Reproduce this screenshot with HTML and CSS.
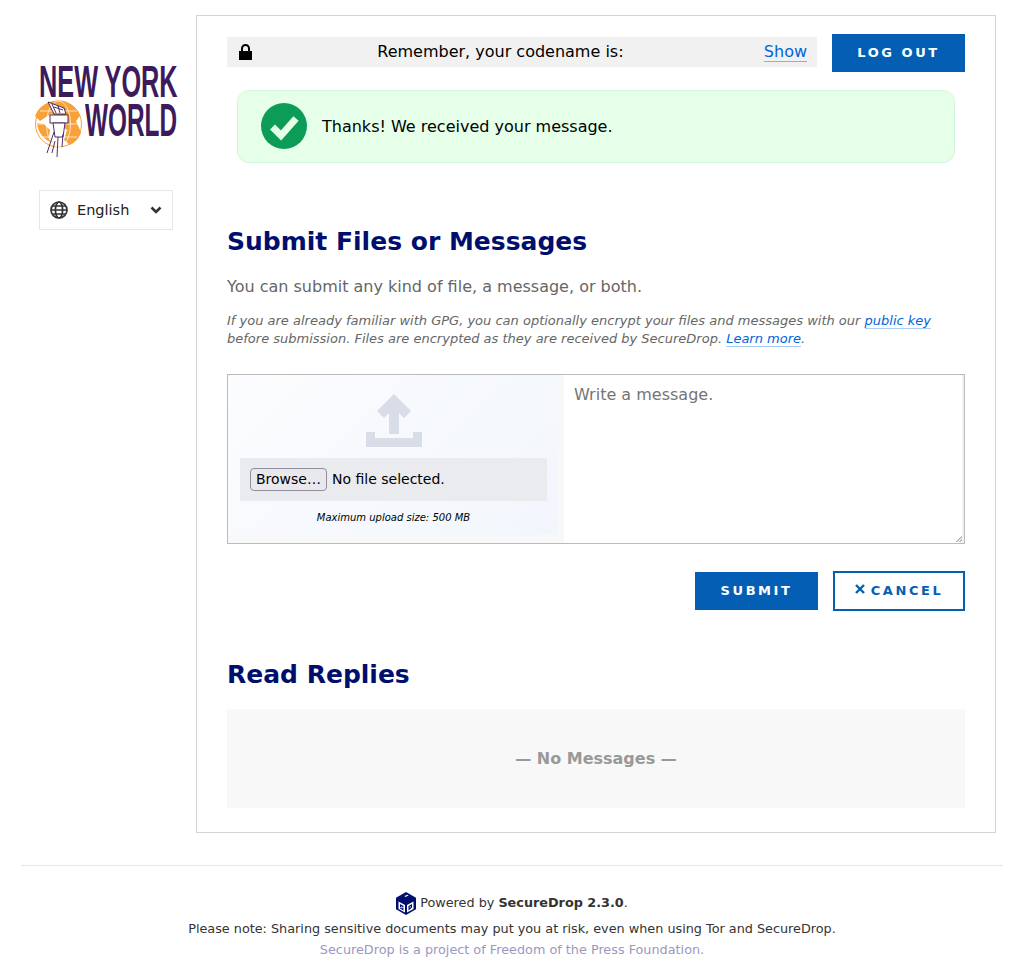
FILE: index.html
```
<!DOCTYPE html>
<html lang="en">
<head>
<meta charset="utf-8">
<title>SecureDrop</title>
<link rel="stylesheet" href="styles.css">
</head>
<body>
<div class="layout">
  <aside class="sidebar">
    <svg class="logo" width="146" height="106" viewBox="0 -6 146 106" role="img" aria-label="New York World">
      <circle cx="23.500" cy="63" r="23" fill="#fff" stroke="#f7a138" stroke-width="1"/>
      <path d="M15 41a23 23 0 0 1 30 14l-4 5 4 9 1 3a23 23 0 0 1-11 12l-6-5 3-10-8-6-2-8-6-2-5 3-6 4-5-5a23 23 0 0 1 15-14z" fill="#f7a138"/>
      <path d="M2 62l7 1 6 6-1 8 4 5a23 23 0 0 1-16-20z" fill="#f7a138"/>
      <g fill="none" stroke="#fff" stroke-width="0.7">
        <ellipse cx="23.500" cy="63" rx="12" ry="23"/>
        <path d="M1 63H46M5 50H42M5 76H42"/>
      </g>
      <g fill="#fff" stroke="#3c1a5b" stroke-width="0.9">
        <path d="M13 41l16 6 2 6H19z"/>
        <path d="M19 46l9 3M17 43l4 9M23 45l2 7" fill="none"/>
        <rect x="15" y="54" width="18" height="8"/>
        <path d="M18 62h12l-2 14H20z"/>
        <path d="M19 71l-7 21M28 73l-1 13M23 76l-1 20M20 80l-3 12" fill="none"/>
      </g>
      <text class="logo-text" transform="translate(4 36) scale(0.575 1)">NEW YORK</text>
      <text class="logo-text logo-text-big" transform="translate(50 75) scale(0.53 1)">WORLD</text>
    </svg>
    <div class="locale">
      <svg class="globe" width="18" height="18" viewBox="0 0 18 18" fill="none" stroke="#333" stroke-width="1.700">
        <circle cx="9" cy="9" r="8"/>
        <ellipse cx="9" cy="9" rx="3.600" ry="8"/>
        <path d="M1 9H17M2 5H16M2 13H16"/>
      </svg>
      <span class="locale-name">English</span>
      <svg class="chevron" width="12" height="8" viewBox="0 0 12 8" fill="none" stroke="#333" stroke-width="2.600">
        <path d="M1.500 1.500L6 6L10.500 1.500"/>
      </svg>
    </div>
  </aside>

  <main class="panel">
    <div class="topbar">
      <div class="codename">
        <svg class="lock" width="13" height="16" viewBox="0 0 13 16">
          <path d="M0 7H13V16H0Z" fill="#000"/>
          <path d="M3 8V4.500a3.500 3.500 0 0 1 7 0V8" fill="none" stroke="#000" stroke-width="2"/>
        </svg>
        <span class="codename-text">Remember, your codename is:</span>
        <a class="show-link" href="#">Show</a>
      </div>
      <a class="btn btn-primary btn-logout" href="#">LOG OUT</a>
    </div>

    <div class="flash">
      <svg class="flash-icon" width="46" height="46" viewBox="0 0 46 46">
        <circle cx="23" cy="23" r="23" fill="#0c9c58"/>
        <path d="M11.500 24L20 32.500L35 15.500" fill="none" stroke="#e5ffe9" stroke-width="7"/>
      </svg>
      <span>Thanks! We received your message.</span>
    </div>

    <h2 class="heading heading-submit">Submit Files or Messages</h2>
    <p class="lead">You can submit any kind of file, a message, or both.</p>
    <p class="note">If you are already familiar with GPG, you can optionally encrypt your files and messages with our <a href="#">public key</a> before submission. Files are encrypted as they are received by SecureDrop. <a href="#">Learn more</a>.</p>

    <form class="composer">
      <div class="upload">
        <svg class="upload-icon" width="56" height="53" viewBox="0 0 56 53" fill="#d9dde7">
          <path d="M28 0L45 17L38 24L33 19V40H23V19L18 24L11 17Z"/>
          <path d="M0 38H9V44H47V38H56V53H0Z"/>
        </svg>
        <div class="file-row">
          <button class="browse" type="button">Browse…</button>
          <span>No file selected.</span>
        </div>
        <p class="max-size">Maximum upload size: 500 MB</p>
      </div>
      <textarea class="message" placeholder="Write a message."></textarea>
    </form>

    <div class="actions">
      <a class="btn btn-primary btn-submit" href="#">SUBMIT</a>
      <a class="btn btn-outline" href="#">
        <svg class="x" width="10" height="10" viewBox="0 0 10 10" fill="none" stroke="#045fb4" stroke-width="2.400">
          <path d="M1 1L9 9M9 1L1 9"/>
        </svg>
        CANCEL
      </a>
    </div>

    <h2 class="heading heading-replies">Read Replies</h2>
    <div class="no-messages">— No Messages —</div>
  </main>
</div>

<footer class="footer">
  <div class="powered">
    <svg class="sd-logo" width="20" height="23" viewBox="0 0 20 23">
      <path d="M10 0L20 5.700V17.300L10 23L0 17.300V5.700Z" fill="#000f6e"/>
      <path d="M2.500 9.500L9 13V20.500L2.500 17ZM11 13L17.500 9.500V17L11 20.500Z" fill="#fff"/>
      <path d="M8.500 4L11.500 2.800L12.500 3.600L9.500 5Z" fill="#fff"/>
      <path d="M4 12L7.500 14V15.500L5 14.200V15L7.500 16.300V18.500L4 16.500V15.400L6.200 16.600V16L4 14.800ZM12.500 14L16 12V15.500L12.500 18.500ZM13.700 14.800V16L14.800 15V14.100Z" fill="#000f6e"/>
    </svg>
    <span class="powered-text">Powered by <strong>SecureDrop 2.3.0</strong>.</span>
  </div>
  <p class="warning">Please note: Sharing sensitive documents may put you at risk, even when using Tor and SecureDrop.</p>
  <p class="fpf">SecureDrop is a project of Freedom of the Press Foundation.</p>
</footer>
</body>
</html>
```
FILE: styles.css
```
* { box-sizing: border-box; }
html, body { margin: 0; padding: 0; }
body {
  background: #fff;
  color: #000;
  font-family: "DejaVu Sans", sans-serif;
  font-size: 16px;
}
.layout {
  display: flex;
  align-items: flex-start;
  padding-top: 15px;
}
.sidebar {
  width: 196px;
  flex: none;
  display: flex;
  flex-direction: column;
  align-items: flex-start;
  padding: 40px 0 0 35px;
}
.logo { display: block; }
.logo-text {
  font-family: "Liberation Sans", sans-serif;
  font-size: 44px;
  font-weight: 700;
  fill: #3c1a5b;
}
.logo-text-big { font-size: 46px; }
.locale {
  margin: 29px 0 0 4px;
  width: 134px;
  height: 40px;
  border: 1px solid #e6e6e6;
  display: flex;
  align-items: center;
  padding: 0 10px;
  font-size: 14.5px;
  color: #222;
}
.locale-name { margin-left: 9px; flex: 1; }
.panel {
  width: 800px;
  height: 818px;
  border: 1px solid #d4d4d4;
  padding: 18px 30px 0;
}
.topbar {
  display: flex;
  align-items: flex-start;
  justify-content: space-between;
}
.codename {
  margin-top: 3px;
  width: 590px;
  height: 30px;
  background: #f1f1f1;
  display: flex;
  align-items: center;
  padding: 0 10px 0 12px;
}
.codename-text { flex: 1; text-align: center; padding-right: 15px; position: relative; top: -1px; }
.show-link {
  color: #0065dc;
  text-decoration: none;
  border-bottom: 1px solid #7db4f0;
  line-height: 19px;
}
.btn {
  display: flex;
  align-items: center;
  justify-content: center;
  height: 38px;
  font-size: 13px;
  font-weight: 700;
  letter-spacing: 2.55px;
  padding-bottom: 2px;
  text-decoration: none;
}
.btn-primary { background: #045fb4; color: #fff; }
.btn-logout { width: 133px; }
.btn-submit { width: 123px; }
.btn-outline {
  width: 132px;
  height: 40px;
  border: 2px solid #045fb4;
  color: #045fb4;
  background: #fff;
}
.x { margin-right: 6px; margin-top: -2px; }
.flash {
  margin: 18px 10px 0;
  height: 73px;
  background: #e5ffe9;
  border: 1px solid #d5f5dc;
  border-radius: 12px;
  display: flex;
  align-items: center;
  gap: 15px;
  padding-left: 23px;
}
.flash-icon { flex: none; margin-bottom: 2px; }
.heading {
  margin: 0;
  color: #000f6e;
  font-size: 25px;
  line-height: 32px;
  font-weight: 700;
}
.heading-submit { margin-top: 63px; }
.lead {
  margin: 17px 0 0;
  color: #666;
  line-height: 24px;
}
.note {
  margin: 13px 0 0;
  color: #666;
  font-size: 13px;
  font-style: italic;
  line-height: 18px;
}
.note a {
  color: #0065dc;
  text-decoration: none;
  border-bottom: 1px solid #a9cdf5;
}
.composer {
  margin-top: 26px;
  height: 170px;
  display: flex;
  border: 1px solid #bbb;
}
.upload {
  width: 336px;
  flex: none;
  background: linear-gradient(135deg, #fbfcfe, #f2f6fc) 0 0 / 330px 160px no-repeat, #f8f8f8;
  display: flex;
  flex-direction: column;
  align-items: center;
  padding: 19px 17px 0 12px;
}
.upload-icon { display: block; flex: none; }
.file-row {
  margin-top: 11px;
  width: 100%;
  height: 43px;
  background: #e9ebef;
  display: flex;
  align-items: center;
  gap: 5px;
  padding: 0 0 1px 10px;
  font-size: 14px;
}
.browse {
  font: inherit;
  height: 23px;
  padding: 0 5px;
  background: #e9e9ed;
  border: 1px solid #8f8f9d;
  border-radius: 4px;
  color: #000;
}
.max-size {
  margin: 10px 0 0;
  font-size: 10px;
  font-style: italic;
  line-height: 13px;
}
.message {
  flex: 1;
  border: 0;
  border-right: 2px solid #f1f1f1;
  outline: 0;
  padding: 10px;
  font: inherit;
  line-height: 19px;
  resize: none;
  background:
    linear-gradient(135deg, transparent 50%, #bbb 50%, #bbb 62%, transparent 62%, transparent 75%, #bbb 75%, #bbb 88%, transparent 88%) right 0 bottom 1px / 6px 6px no-repeat,
    #fff;
}
.message::placeholder { color: #757575; opacity: 1; }
.actions {
  margin-top: 27px;
  display: flex;
  justify-content: flex-end;
  align-items: center;
  gap: 15px;
}
.heading-replies { margin-top: 48px; }
.no-messages {
  margin-top: 18px;
  height: 99px;
  background: #f8f8f8;
  display: flex;
  align-items: center;
  justify-content: center;
  color: #999;
  font-size: 16px;
  font-weight: 700;
}
.footer {
  margin: 32px 21px 0;
  border-top: 1px solid #e6e6e6;
  text-align: center;
  font-size: 12.8px;
  color: #333;
  padding-top: 26px;
}
.footer p { margin: 0; }
.powered {
  display: flex;
  align-items: center;
  justify-content: center;
  gap: 4px;
  height: 23px;
}
.powered-text { margin-top: -2px; }
.warning { margin-top: 5px !important; line-height: 18px; }
.fpf { margin-top: 3px !important; line-height: 18px; color: #9b98bf; }
```
